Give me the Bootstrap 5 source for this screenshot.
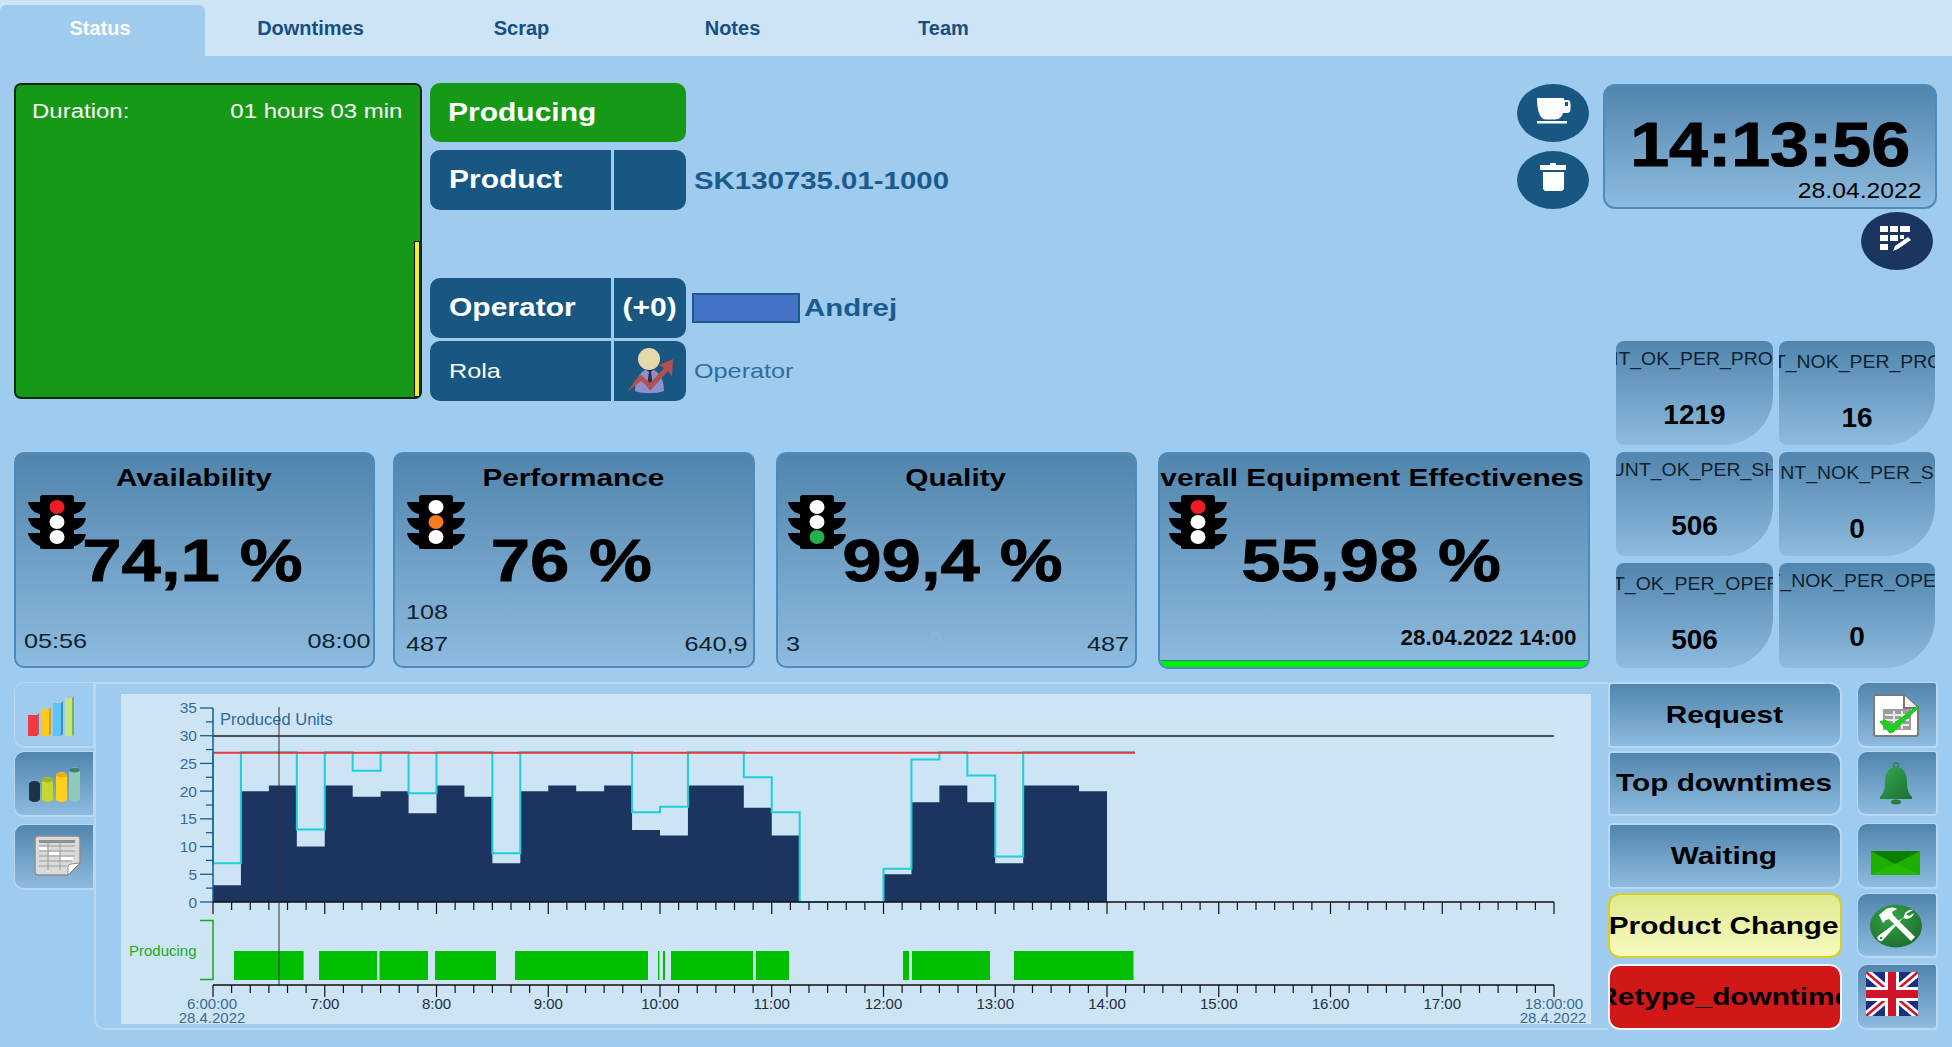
<!DOCTYPE html>
<html lang="en">
<head>
<meta charset="utf-8">
<title>Status</title>
<link href="https://cdn.jsdelivr.net/npm/bootstrap@5.3.0/dist/css/bootstrap.min.css" rel="stylesheet">
<style>
:root{--page:#9ecbee;--navy:#175782;--grad:linear-gradient(#5185ad,#8ebbdf);}
html,body{height:1047px;overflow:hidden;}
body{background:var(--page);font-family:"Liberation Sans",Arial,sans-serif;color:#000;}
.sx{display:inline-block;transform:scaleX(1.2);flex:none;}
.sxl{transform-origin:left center;}
.sxr{transform-origin:right center;}
.sx-mid{transform:scaleX(1.18);}
.tabbar{height:56px;background:#cce4f6;}
.tabbar .nav-link{width:211px;height:51px;margin-top:5px;padding:0 0 5px 0;display:flex;align-items:center;justify-content:center;font-size:20px;font-weight:700;color:#174f80;border-radius:6px 6px 0 0;}
.tabbar .nav-link.active{width:205px;padding-right:5px;background:var(--page);color:#fff;}
.top-zone{height:612px;}
.left-zone{width:1603px;padding:27px 0 0 14px;}
.upper{height:318px;}
.state-panel{width:408px;height:316px;margin-right:8px;background:#169916;border:2px solid #0d2a10;border-radius:7px;color:#fff;font-size:20px;padding:11px 18px 0 16px;position:relative;}
.level{position:absolute;right:0;bottom:0;width:6px;height:156px;background:#f2f02a;border:1px solid #111;}
.info{flex:1;}
.info-row{height:60px;}
.pill{background:var(--navy);color:#fff;height:100%;display:flex;align-items:center;}
.pill-a{width:181px;padding-left:19px;font-size:25px;font-weight:700;border-radius:10px 0 0 10px;}
.pill-b{width:72px;margin-left:3px;justify-content:center;font-size:25px;font-weight:700;border-radius:0 10px 10px 0;}
.pill-thin{font-weight:400;font-size:21px;}
.producing{width:256px;height:59px;background:#169916;color:#fff;border-radius:10px;font-size:25px;font-weight:700;padding-left:18px;display:flex;align-items:center;margin-bottom:8px;}
.val{font-size:24.5px;font-weight:700;color:#1b5a8c;margin-left:8px;}
.val-lo{margin-top:4px;}
.val-thin{font-weight:400;font-size:21px;color:#2f6c9e;}
.op-rect{width:108px;height:30px;margin-left:6px;background:#4472c4;border:2px solid #1b5a8c;}
.spacer-row{height:69px;}
.rola-row{margin-top:3px;}
.round-btn{width:72px;height:58px;background:var(--navy);display:flex;}
.round-btn svg{width:100%;height:100%;}
.round-dark{background:#1a3560;}
.cups{margin:1px 14px 0 0;gap:9px;}
.right-zone{width:349px;padding-top:28px;}
.clock{width:334px;height:125px;background:var(--grad);border:2px solid #4c8bbb;border-radius:12px;padding:22px 13px 0 0;text-align:center;}
.clock-time{font-size:63px;font-weight:700;line-height:72px;padding-left:13px;-webkit-text-stroke:1px #000;}
.clock-time .sx{transform:scaleX(1.11);}
.clock-date{font-size:21.5px;line-height:24px;text-align:right;margin-top:-1px;}
.clock-date .sx{transform:scaleX(1.15);}
.edit-slot{width:334px;margin-top:3px;padding-right:4px;}
.counters{display:grid;grid-template-columns:157px 156px;grid-template-rows:104px 104px 105px;column-gap:6px;row-gap:7px;margin:71px 0 0 13px;}
.ctr{background:var(--grad);border-radius:8px 8px 50px 8px;overflow:hidden;text-align:center;padding-top:7px;}
.ctr-lo{padding-top:10px;}
.ctr-name{display:flex;justify-content:center;white-space:nowrap;font-size:18px;line-height:22px;color:#10222f;height:22px;}
.ctr-name .sx{transform:scaleX(1.08);}
.ctr-num{font-size:28px;font-weight:700;line-height:32px;margin-top:29px;}
.kpis{margin-top:51px;height:217px;}
.kpi{height:216px;background:var(--grad);border:2px solid #4c8bbb;border-radius:10px;position:relative;overflow:hidden;display:flex;flex-direction:column;width:361px;}
.kpi:nth-child(2){width:362px;margin-left:18px;}
.kpi:nth-child(3){margin-left:21px;}
.kpi:nth-child(4){width:432px;margin-left:21px;height:217px;}
.kpi-title{display:flex;justify-content:center;white-space:nowrap;font-size:24px;font-weight:700;line-height:30px;margin:9px 2px 0 0;overflow:hidden;}
.kpi-title .sx{transform:scaleX(1.24);}
.title-o{margin:9px 4px 0 0;padding-right:7px;}
.kpi-num{font-size:60px;font-weight:700;line-height:70px;text-align:center;margin-top:33px;padding-right:5px;white-space:nowrap;-webkit-text-stroke:.8px #000;}
.kpi-foot{margin-top:auto;display:flex;justify-content:space-between;align-items:flex-end;font-size:21px;line-height:32px;padding:0 6px 6px 8px;color:#10222f;}
.foot-a{padding:0 2px 9px 8px;}
.foot-p{padding:0 5px 6px 11px;}
.ghost{position:absolute;left:152px;bottom:15px;line-height:24px;color:#8db7d9;font-size:20px;}
.light-sig{position:absolute;left:12px;top:41px;width:59px;height:55px;}
.light-q{left:10px;}
.light-o{left:9px;}
.num-q{padding-right:8px;}
.oee-bar{height:7px;background:#00ee00;border-top:1px solid #1c7ea8;}
.oee-date{justify-content:flex-end;font-weight:700;padding:0 12px 6px 0;font-size:22px;color:#0c0c0c;}
.oee-date .sx{transform:scaleX(1.02);}
.bottom{margin:14px 0 0 14px;height:348px;}
.cell{width:81px;height:66px;background:var(--grad);border:1px solid #b6d8f3;border-width:1px 2px 2px 1px;border-radius:10px 0 0 10px;padding:0;display:block;overflow:hidden;}
.cell svg{display:block;width:81px;height:66px;}
.cell-on{background:#9ecbee;}
.stack{display:flex;flex-direction:column;}
.stack>*:nth-child(2){margin-top:3px;}
.stack>*:nth-child(3){margin-top:7px;}
.stack>*:nth-child(4){margin-top:4px;}
.stack>*:nth-child(5){margin-top:6px;}
.chart-box{width:1514px;height:348px;margin-left:-1px;padding:10px 17px 4px 25px;border:2px solid #b6d8f3;border-right:0;border-radius:0 0 0 10px;}
.chart-box svg{display:block;width:1470px;height:330px;background:#cde4f5;}
.chart-box text{font-family:"Liberation Sans",Arial,sans-serif;}
.act{width:234px;height:66px;padding:0 2px 0 0;display:flex;align-items:center;justify-content:center;overflow:hidden;white-space:nowrap;background:var(--grad);border:2px solid #b6d8f3;border-radius:4px 12px 12px 4px;font-size:24px;font-weight:700;color:#000;}
.act:hover{background:var(--grad);color:#000;}
.act .sx{transform:scaleX(1.24);}
.act-yellow,.act-yellow:hover{background:linear-gradient(#dfea8f,#f8fac0);border-color:#d8cf28;border-radius:12px;}
.act-red,.act-red:hover{background:#d01818;border-color:#eef4f8;border-radius:12px;}
.acts{margin-right:15px;}
.icon-col .cell{border-radius:10px 4px 4px 10px;border-width:1px 2px 2px 1px;}
</style>
</head>
<body>
<ul class="nav tabbar">
  <li class="nav-item"><a class="nav-link active" href="#">Status</a></li>
  <li class="nav-item"><a class="nav-link" href="#">Downtimes</a></li>
  <li class="nav-item"><a class="nav-link" href="#">Scrap</a></li>
  <li class="nav-item"><a class="nav-link" href="#">Notes</a></li>
  <li class="nav-item"><a class="nav-link" href="#">Team</a></li>
</ul>

<div class="d-flex top-zone">
  <div class="left-zone">
    <div class="d-flex upper">
      <div class="state-panel">
        <div class="d-flex justify-content-between">
          <span class="sx sxl">Duration:</span><span class="sx sxr">01 hours 03 min</span>
        </div>
        <div class="level"></div>
      </div>
      <div class="info d-flex flex-column">
        <div class="producing"><span class="sx sxl">Producing</span></div>
        <div class="info-row d-flex align-items-center">
          <div class="pill pill-a"><span class="sx sxl">Product</span></div>
          <div class="pill pill-b"></div>
          <span class="val val-lo"><span class="sx sxl">SK130735.01-1000</span></span>
        </div>
        <div class="spacer-row"></div>
        <div class="info-row d-flex align-items-center">
          <div class="pill pill-a"><span class="sx sxl">Operator</span></div>
          <div class="pill pill-b"><span class="sx">(+0)</span></div>
          <div class="op-rect"></div>
          <span class="val ms-1"><span class="sx sxl">Andrej</span></span>
        </div>
        <div class="info-row d-flex align-items-center rola-row">
          <div class="pill pill-a pill-thin"><span class="sx sxl">Rola</span></div>
          <div class="pill pill-b p-0">
            <svg width="72" height="60" viewBox="0 0 72 60">
              <path d="M21 50c0-12 5-20 13-22h3c8 2 13 10 13 22-7 3-22 3-29 0z" fill="#8f90cb"/>
              <path d="M31 28h9l-3 3 2 14-3 4-3-4 2-14z" fill="#2b2f4a"/>
              <ellipse cx="35" cy="18" rx="11" ry="11" fill="#e6d9a9"/>
              <path d="M13 51l13-18 10 9 14-15-5-3 14-6-1 17-4-5-17 19-10-9z" fill="#b4504f"/>
            </svg>
          </div>
          <span class="val val-thin"><span class="sx sxl">Operator</span></span>
        </div>
      </div>
      <div class="cups d-flex flex-column">
        <div class="round-btn rounded-circle">
          <svg viewBox="0 0 72 58"><path d="M20 14h27v2h2.500c3.500 0 4 1.500 4 4v5c0 2.500-1 4-4 4H46c-1 3.500-3 6.500-8 6.500H29c-6 0-9-8-9-21.500z" fill="#fff"/><rect x="48" y="18" width="3" height="4" fill="#175782"/><rect x="20" y="37" width="30" height="2.500" fill="#fff"/></svg>
        </div>
        <div class="round-btn rounded-circle">
          <svg viewBox="0 0 72 58"><path d="M23 14h26v5H23z" fill="#fff"/><rect x="33" y="12" width="6" height="3" fill="#fff"/><path d="M26 21h21v17l-2 2H28l-2-2z" fill="#fff"/></svg>
        </div>
      </div>
    </div>
    <div class="d-flex kpis">
      <div class="kpi">
        <svg class="light-sig" viewBox="0 0 59 55"><use href="#sig"/><ellipse cx="29" cy="12" rx="7.500" ry="7" fill="#ee1c24"/><ellipse cx="29" cy="27" rx="7.500" ry="7" fill="#fff"/><ellipse cx="29" cy="42" rx="7.500" ry="7" fill="#fff"/></svg>
        <div class="kpi-title"><span class="sx">Availability</span></div>
        <div class="kpi-num"><span class="sx sx-mid">74,1 %</span></div>
        <div class="kpi-foot foot-a"><span class="sx sxl">05:56</span><span class="sx sxr">08:00</span></div>
      </div>
      <div class="kpi">
        <svg class="light-sig" viewBox="0 0 59 55"><use href="#sig"/><ellipse cx="29" cy="12" rx="7.500" ry="7" fill="#fff"/><ellipse cx="29" cy="27" rx="7.500" ry="7" fill="#f47b20"/><ellipse cx="29" cy="42" rx="7.500" ry="7" fill="#fff"/></svg>
        <div class="kpi-title"><span class="sx">Performance</span></div>
        <div class="kpi-num"><span class="sx sx-mid">76 %</span></div>
        <div class="kpi-foot foot-p"><div><span class="sx sxl d-block">108</span><span class="sx sxl d-block">487</span></div><span class="sx sxr">640,9</span></div>
      </div>
      <div class="kpi">
        <svg class="light-sig light-q" viewBox="0 0 59 55"><use href="#sig"/><ellipse cx="29" cy="12" rx="7.500" ry="7" fill="#fff"/><ellipse cx="29" cy="27" rx="7.500" ry="7" fill="#fff"/><ellipse cx="29" cy="42" rx="7.500" ry="7" fill="#22b14c"/></svg>
        <div class="kpi-title"><span class="sx">Quality</span></div>
        <div class="kpi-num num-q"><span class="sx sx-mid">99,4 %</span></div>
        <span class="ghost">0</span>
        <div class="kpi-foot"><span class="sx sxl">3</span><span class="sx sxr">487</span></div>
      </div>
      <div class="kpi">
        <svg class="light-sig light-o" viewBox="0 0 59 55"><use href="#sig"/><ellipse cx="29" cy="12" rx="7.500" ry="7" fill="#ee1c24"/><ellipse cx="29" cy="27" rx="7.500" ry="7" fill="#fff"/><ellipse cx="29" cy="42" rx="7.500" ry="7" fill="#fff"/></svg>
        <div class="kpi-title title-o"><span class="sx">Overall Equipment Effectiveness</span></div>
        <div class="kpi-num"><span class="sx sx-mid">55,98 %</span></div>
        <div class="kpi-foot oee-date"><span class="sx sxr">28.04.2022 14:00</span></div>
        <div class="oee-bar"></div>
      </div>
    </div>
  </div>
  <div class="right-zone">
    <div class="clock">
      <div class="clock-time"><span class="sx">14:13:56</span></div>
      <div class="clock-date"><span class="sx sxr">28.04.2022</span></div>
    </div>
    <div class="edit-slot d-flex justify-content-end">
      <div class="round-btn round-dark rounded-circle">
        <svg viewBox="0 0 72 58" fill="#fff"><rect x="19" y="14" width="8" height="6"/><rect x="29" y="14" width="8" height="6"/><rect x="39" y="14" width="10" height="6"/><rect x="19" y="23" width="8" height="6"/><rect x="29" y="23" width="8" height="6"/><rect x="39" y="23" width="4" height="4"/><rect x="19" y="32" width="8" height="6"/><path d="M32 39l2-5 13-9 3 3-13 9z"/></svg>
      </div>
    </div>
    <div class="counters">
      <div class="ctr"><div class="ctr-name"><span class="sx">COUNT_OK_PER_PRODUCT</span></div><div class="ctr-num">1219</div></div>
      <div class="ctr ctr-lo"><div class="ctr-name"><span class="sx">COUNT_NOK_PER_PRODUCT</span></div><div class="ctr-num">16</div></div>
      <div class="ctr"><div class="ctr-name"><span class="sx">COUNT_OK_PER_SHIFT</span></div><div class="ctr-num">506</div></div>
      <div class="ctr ctr-lo"><div class="ctr-name"><span class="sx">COUNT_NOK_PER_SHIFT</span></div><div class="ctr-num">0</div></div>
      <div class="ctr ctr-lo"><div class="ctr-name"><span class="sx">COUNT_OK_PER_OPERATOR</span></div><div class="ctr-num">506</div></div>
      <div class="ctr"><div class="ctr-name"><span class="sx">COUNT_NOK_PER_OPERATOR</span></div><div class="ctr-num">0</div></div>
    </div>
  </div>
</div>

<div class="d-flex bottom">
  <div class="stack">
    <div class="cell cell-on">
      <svg viewBox="0 0 81 66">
        <rect x="13" y="32" width="9" height="21" fill="#ee3a45"/><path d="M22 32l2-2v21l-2 2z" fill="#b9555c"/>
        <rect x="26" y="26" width="8" height="27" fill="#ffc91a"/><path d="M34 26l2-2v27l-2 2z" fill="#c6a23a"/>
        <rect x="38" y="20" width="8" height="33" fill="#5cc4f7"/><path d="M46 20l2-2v33l-2 2z" fill="#3a8ec0"/>
        <rect x="50" y="15" width="7" height="38" fill="#c5e67e"/><path d="M57 15l2-2v38l-2 2z" fill="#7fb34d"/>
      </svg>
    </div>
    <div class="cell">
      <svg viewBox="0 0 81 66">
        <path d="M14 32a5.500 3 0 0 1 11 0v15a5.500 3 0 0 1-11 0z" fill="#1f3348"/>
        <path d="M27 28a5.500 3 0 0 1 11 0v19a5.500 3 0 0 1-11 0z" fill="#c3d92f"/><ellipse cx="32.500" cy="28" rx="5.500" ry="2.500" fill="#9fb32a"/>
        <path d="M41 23a5.500 3 0 0 1 11 0v24a5.500 3 0 0 1-11 0z" fill="#ffd21a"/><ellipse cx="46.500" cy="23" rx="5.500" ry="2.500" fill="#f0a81c"/>
        <path d="M54 18a5.500 3 0 0 1 11 0v29a5.500 3 0 0 1-11 0z" fill="#8fc9b8"/><ellipse cx="59.500" cy="18" rx="5.500" ry="2.500" fill="#3f8272"/>
      </svg>
    </div>
    <div class="cell">
      <svg viewBox="0 0 81 66">
        <path d="M23 11h39q3 0 3 3v24l-12 12H23q-3 0-3-3V14q0-3 3-3z" fill="#d9dadb" stroke="#8e8e8e" stroke-width="1.500"/>
        <path d="M24 15h36v3H24z" fill="#8f8f8f"/>
        <path d="M24 21h36M24 26h36M24 31h36M24 36h33M24 41h28M33 15v30M45 15v30" stroke="#9b9b9b" stroke-width="1" fill="none"/>
        <rect x="24" y="22" width="8" height="3" fill="#fff"/><rect x="34" y="27" width="10" height="3" fill="#fff"/><rect x="46" y="32" width="12" height="3" fill="#fff"/>
        <path d="M53 50v-8q0-3 3-3l9-1z" fill="#fff" stroke="#8e8e8e"/>
      </svg>
    </div>
  </div>
  <div class="chart-box">
    <svg id="chart" viewBox="121 694 1470 330"></svg>
  </div>
  <div class="stack acts">
    <button class="btn act"><span class="sx">Request</span></button>
    <button class="btn act"><span class="sx">Top downtimes</span></button>
    <button class="btn act"><span class="sx">Waiting</span></button>
    <button class="btn act act-yellow"><span class="sx">Product Change</span></button>
    <button class="btn act act-red"><span class="sx">Retype_downtime</span></button>
  </div>
  <div class="stack icon-col">
    <div class="cell">
      <svg viewBox="0 0 81 66">
        <path d="M18 12h28l14 13v26q0 2-2 2H18q-2 0-2-2V14q0-2 2-2z" fill="#fff" stroke="#7a7a7a" stroke-width="2"/>
        <path d="M46 12v13h14" fill="#f1f1f1" stroke="#7a7a7a" stroke-width="2"/>
        <path d="M25 26h28v21H25z" fill="#9d9d9d"/>
        <path d="M27 32h24M27 37h24M27 42h24M36 28v18M44 28v18" stroke="#e8e8e8" stroke-width="2" fill="none"/>
        <path d="M22 39l10 11 3-1L61 24l-2-1-25 19-7-5z" fill="#1ed01e" stroke="#17c017"/>
      </svg>
    </div>
    <div class="cell">
      <svg viewBox="0 0 81 66">
        <defs><linearGradient id="bellg" x1="0" y1="0" x2="1" y2="1"><stop offset="0" stop-color="#35a84f"/><stop offset="1" stop-color="#1b6e33"/></linearGradient></defs>
        <circle cx="38" cy="13" r="2.200" fill="none" stroke="#2a8a44" stroke-width="1.300"/>
        <path d="M38 15c8 0 11 7 11 15 0 8 2 12 5 15v2H22v-2c3-3 5-7 5-15 0-8 3-15 11-15z" fill="url(#bellg)"/>
        <ellipse cx="38" cy="50" rx="5" ry="2.500" fill="#2a7a40"/>
      </svg>
    </div>
    <div class="cell">
      <svg viewBox="0 0 81 66">
        <rect x="13" y="27" width="49" height="24" fill="#1cae00"/>
        <path d="M13 51l24-12 25 12z" fill="#25b800"/>
        <path d="M13 27h49L37 40z" fill="#0c7e00"/>
      </svg>
    </div>
    <div class="cell">
      <svg viewBox="0 0 81 66">
        <defs><radialGradient id="toolg" cx=".4" cy=".3" r=".8"><stop offset="0" stop-color="#31a444"/><stop offset="1" stop-color="#1c6a2e"/></radialGradient></defs>
        <ellipse cx="38" cy="32" rx="26" ry="21.500" fill="url(#toolg)"/>
        <path d="M21 21l7-6c4-2 8-2 11 0l-5 3 1 3 22 22-4 4-22-22-3 1-3 3z" fill="#fff"/>
        <path d="M55 16c-4-1-9 2-9 7l-26 19c-2 2 1 6 4 5l21-23c4 2 10 0 11-5l-5 3-3-2z" fill="#fff"/>
        <circle cx="23" cy="44" r="1.300" fill="#2a8a44"/>
      </svg>
    </div>
    <div class="cell">
      <svg viewBox="0 0 81 66">
        <defs><clipPath id="flagc"><rect x="8" y="7" width="52" height="44"/></clipPath></defs>
        <g clip-path="url(#flagc)">
          <rect x="8" y="7" width="52" height="44" fill="#1b2f7e"/>
          <path d="M8 7l52 44M60 7L8 51" stroke="#fff" stroke-width="8"/>
          <path d="M8 7l52 44M60 7L8 51" stroke="#cf142b" stroke-width="2.500"/>
          <path d="M34 7v44M8 29h52" stroke="#fff" stroke-width="14"/>
          <path d="M34 7v44M8 29h52" stroke="#cf142b" stroke-width="8"/>
        </g>
      </svg>
    </div>
  </div>
</div>

<svg width="0" height="0" class="position-absolute">
  <defs>
    <g id="sig" fill="#000">
      <path d="M0 7h12V3q0-3 3-3h28q3 0 3 3v4h12c-1 6-6 11-12 12v4h12c-1 6-6 11-12 12v4h12c-1 6-6 11-12 12v2q0 1-3 1H15q-3 0-3-1v-2C6 49 1 44 0 38h12v-3C6 34 1 29 0 23h12v-4C6 18 1 13 0 7z"/>
    </g>
  </defs>
</svg>

<script>
(function(){
  var X=function(h){return 213+111.75*h;};
  var Y=function(v){return 902-5.543*v;};
  var seg=function(i){return X(i/4);};
  var s='';
  var bars=[3,20,21,10,21,19,20,16,21,19,7,20,21,20,21,13,12,21,21,17,12,0,0,0,5,18,21,18,7,21,21,20];
  var cyan=[7,27,27,13.1,27,23.7,27,19.6,27,27,8.8,27,27,27,27,16.2,17.2,27,27,22.5,16.2,0,0,0,6,25.7,27,22.8,8.2,27,27,27,27];
  var d='M'+X(0)+' '+Y(0);
  bars.forEach(function(v,i){d+='L'+seg(i)+' '+Y(v)+'L'+seg(i+1)+' '+Y(v);});
  d+='L'+seg(bars.length)+' '+Y(0)+'Z';
  s+='<path d="'+d+'" fill="#1b3560"/>';
  var c='M'+X(0)+' '+Y(27)+'L'+X(0)+' '+Y(cyan[0]);
  cyan.forEach(function(v,i){c+='L'+seg(i)+' '+Y(v)+'L'+seg(i+1)+' '+Y(v);});
  s+='<path d="'+c+'" fill="none" stroke="#1ccfd8" stroke-width="2"/>';
  s+='<path d="M213 736H1554" stroke="#222" stroke-width="1.300"/>';
  s+='<path d="M213 752.700H1135" stroke="#e8383d" stroke-width="2"/>';
  s+='<path d="M213 708V902" stroke="#1a5a8a" stroke-width="1.500"/>';
  for(var v=0;v<=35;v+=2.5){
    var major=v%5===0;
    s+='<path d="M'+(major?200:206)+' '+Y(v)+'H213" stroke="#1a5a8a" stroke-width="1.300"/>';
    if(major) s+='<text x="197" y="'+(Y(v)+5.500)+'" text-anchor="end" font-size="15.500" fill="#3a6a94">'+v+'</text>';
  }
  s+='<text x="220" y="725" font-size="16.500" fill="#2d6a9a">Produced Units</text>';
  [[902,910,914],[985,993,997]].forEach(function(a){
    s+='<path d="M213 '+a[0]+'H1554" stroke="#111" stroke-width="1.500"/>';
    for(var i=0;i<=72;i++){
      var m=i%6===0, x=X(i/6);
      s+='<path d="M'+x+' '+a[0]+'V'+(m?a[2]:a[1])+'" stroke="#111" stroke-width="1.200"/>';
    }
  });
  s+='<path d="M200 920.500H213V979.500H200" fill="none" stroke="#1da51d" stroke-width="1.500"/>';
  s+='<text x="129" y="956" font-size="15" fill="#22aa22">Producing</text>';
  [[234,303.6],[319,377],[379.5,428],[435,496],[515,648],[658,659.4],[663,665],[671,753],[756,789],[903,909],[912,990],[1014,1133.5]].forEach(function(r){
    s+='<rect x="'+r[0]+'" y="951" width="'+(r[1]-r[0])+'" height="29" fill="#00bf00"/>';
  });
  for(var h=7;h<=17;h++){
    s+='<text x="'+X(h-6)+'" y="1009" text-anchor="middle" font-size="15" fill="#222d3a">'+h+':00</text>';
  }
  s+='<text x="212" y="1009" text-anchor="middle" font-size="15" fill="#3a6a94">6:00:00</text>';
  s+='<text x="212" y="1023" text-anchor="middle" font-size="15" fill="#3a6a94">28.4.2022</text>';
  s+='<text x="1554" y="1009" text-anchor="middle" font-size="15" fill="#3a6a94">18:00:00</text>';
  s+='<text x="1553" y="1023" text-anchor="middle" font-size="15" fill="#3a6a94">28.4.2022</text>';
  s+='<path d="M279 707V986" stroke="#333" stroke-width="1"/>';
  document.getElementById('chart').innerHTML=s;
})();
</script>
<script src="https://cdn.jsdelivr.net/npm/bootstrap@5.3.0/dist/js/bootstrap.bundle.min.js"></script>
</body>
</html>
